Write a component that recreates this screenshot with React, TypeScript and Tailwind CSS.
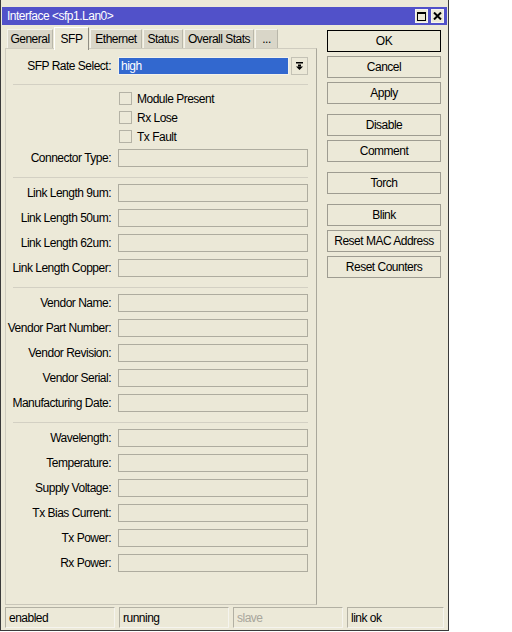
import React from 'react';

const tabs = [
  { label: 'General', w: 'w-[46px]' },
  { label: 'SFP', w: 'w-[35px]' },
  { label: 'Ethernet', w: 'w-[52px]' },
  { label: 'Status', w: 'w-[40px]' },
  { label: 'Overall Stats', w: 'w-[70px]' },
  { label: '...', w: 'w-[23px]' },
];

const groups: string[][] = [
  ['Link Length 9um', 'Link Length 50um', 'Link Length 62um', 'Link Length Copper'],
  ['Vendor Name', 'Vendor Part Number', 'Vendor Revision', 'Vendor Serial', 'Manufacturing Date'],
  ['Wavelength', 'Temperature', 'Supply Voltage', 'Tx Bias Current', 'Tx Power', 'Rx Power'],
];

const actions: { label: string; gap?: boolean; primary?: boolean }[] = [
  { label: 'OK', primary: true },
  { label: 'Cancel' },
  { label: 'Apply' },
  { label: 'Disable', gap: true },
  { label: 'Comment' },
  { label: 'Torch', gap: true },
  { label: 'Blink', gap: true },
  { label: 'Reset MAC Address' },
  { label: 'Reset Counters' },
];

const status = [
  { text: 'enabled', w: 'w-[110px]' },
  { text: 'running', w: 'w-[110px]' },
  { text: 'slave', w: 'w-[110px]', dim: true },
  { text: 'link ok', w: 'w-[97px]' },
];

function Separator({ className }: { className: string }) {
  return <div className={`ml-[7px] border-t border-[#d3d0c3] ${className}`} />;
}

function Field({ label }: { label: string }) {
  return (
    <div className="flex items-center h-[18px]">
      <span className="w-[106px] text-right pr-px whitespace-nowrap">{label}:</span>
      <div className="ml-[6px] flex-1 h-[18px] border border-[#aeac9f] bg-[#ebe8d7]" />
    </div>
  );
}

function Check({ label }: { label: string }) {
  return (
    <div className="flex items-center h-[19px] pl-[113px]">
      <div className="w-[13px] h-[13px] border border-[#b4b2a5] bg-[#ece9d8]" />
      <span className="ml-[5px]">{label}</span>
    </div>
  );
}

export default function App() {
  return (
    <div className="w-[512px] h-[632px] bg-white font-['Liberation_Sans',Arial,sans-serif] text-[12px] tracking-[-0.5px] leading-none text-black">
      <div className="w-[449px] h-[631px] bg-[#ece9d8] border-x border-b border-[#3a3a3a] px-px pt-[7px] pb-[2px] flex flex-col">
        {/* title bar */}
        <div className="h-[18px] bg-[#5151c9] flex items-center pl-[5px] pr-[3px]">
          <span className="text-white flex-1">Interface &lt;sfp1.Lan0&gt;</span>
          <div className="w-[13px] h-[14px] bg-[#ece9d8] border border-[#f6f5ee] flex items-center justify-center mr-[3px]">
            <div className="w-[9px] h-[9px] border border-black border-t-2" />
          </div>
          <div className="w-[13px] h-[14px] bg-[#ece9d8] border border-[#f6f5ee] flex items-center justify-center">
            <svg width="9" height="8" viewBox="0 0 9 8">
              <path d="M1 0.5 L8 7.5 M8 0.5 L1 7.5" stroke="black" strokeWidth="2" />
            </svg>
          </div>
        </div>

        <div className="flex flex-1 mt-[2px]">
          {/* tabs and SFP page */}
          <div className="w-[312px] ml-[3px] flex flex-col">
            <div className="h-[21px] flex items-end pl-[2px] relative z-10">
              {tabs.map((t) =>
                t.label === 'SFP' ? (
                  <div
                    key={t.label}
                    className={`${t.w} h-[23px] -mb-[2px] flex items-center justify-center bg-[#ece9d8] border-t border-l border-white border-r border-r-[#8f8d82] mr-px`}
                  >
                    {t.label}
                  </div>
                ) : (
                  <div
                    key={t.label}
                    className={`${t.w} h-[19px] flex items-center justify-center bg-[#d9d6c8] border-t border-l border-[#f4f3ec] border-r border-r-[#b9b7aa] mr-px`}
                  >
                    {t.label}
                  </div>
                )
              )}
            </div>
            <div className="flex-1 border border-[#cfccbf] border-r-[#a9a79b] border-b-[#c9c6b9] pt-[8px] pr-[8px] flex flex-col">
              <div className="flex items-center h-[18px]">
                <span className="w-[106px] text-right pr-px whitespace-nowrap">SFP Rate Select:</span>
                <div className="ml-[6px] w-[171px] h-[18px] border border-[#f2f1ea] bg-[#3268cf] text-white flex items-center pl-[2px]">
                  high
                </div>
                <div className="ml-[2px] flex-1 h-[18px] border border-[#c4c2b5] flex items-center justify-center">
                  <svg width="7" height="8" viewBox="0 0 7 8">
                    <rect x="0" y="0" width="7" height="1.5" fill="black" />
                    <rect x="2" y="2.5" width="3" height="2" fill="black" />
                    <path d="M0 4.5 H7 L3.5 8 Z" fill="black" />
                  </svg>
                </div>
              </div>
              <Separator className="mt-[9px]" />
              <div className="mt-[4px]">
                <Check label="Module Present" />
                <Check label="Rx Lose" />
                <Check label="Tx Fault" />
              </div>
              <div className="mt-[3px]">
                <Field label="Connector Type" />
              </div>
              {groups.map((g, i) => (
                <React.Fragment key={i}>
                  <Separator className="mt-[10px]" />
                  <div className="mt-[6px] flex flex-col gap-[7px]">
                    {g.map((l) => (
                      <Field key={l} label={l} />
                    ))}
                  </div>
                </React.Fragment>
              ))}
            </div>
          </div>

          {/* action buttons */}
          <div className="ml-[10px] w-[114px] pt-[3px] flex flex-col">
            {actions.map((a) => (
              <button
                key={a.label}
                className={`h-[22px] flex items-center justify-center bg-[#ece9d8] ${
                  a.primary ? 'border border-black' : 'border border-[#9e9c91]'
                } ${a.gap ? 'mt-[10px]' : 'mt-[4px]'} first:mt-0`}
              >
                {a.label}
              </button>
            ))}
          </div>
        </div>

        {/* status bar */}
        <div className="h-[21px] mt-[2px] ml-[3px] flex gap-[4px]">
          {status.map((s) => (
            <div
              key={s.text}
              className={`${s.w} h-full border border-[#b2b0a3] border-r-[#f5f4ee] border-b-[#f5f4ee] flex items-center pl-[3px] ${
                s.dim ? 'text-[#a8a69c]' : ''
              }`}
            >
              {s.text}
            </div>
          ))}
        </div>
      </div>
    </div>
  );
}
